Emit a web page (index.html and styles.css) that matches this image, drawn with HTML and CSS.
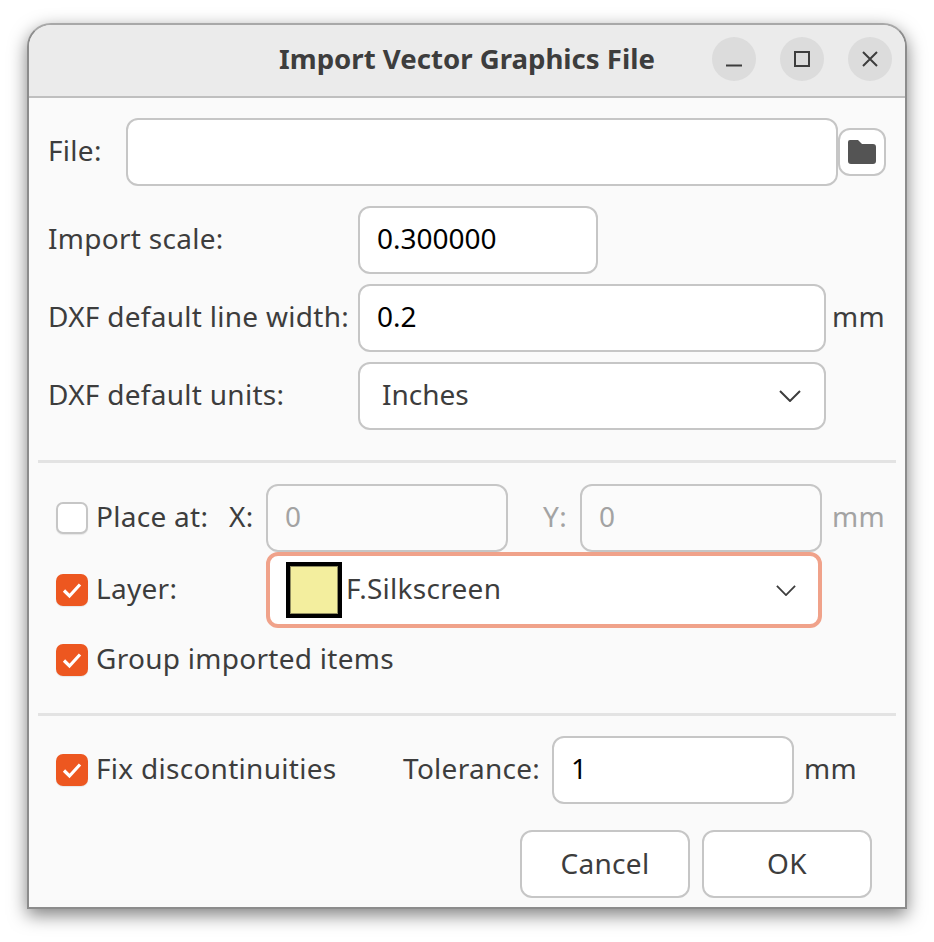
FILE: index.html
```html
<!DOCTYPE html>
<html lang="en">
<head>
    <meta charset="UTF-8">
    <meta name="viewport" content="width=device-width, initial-scale=1.0">
    <title>Import Vector Graphics File</title>
    <link rel="stylesheet" href="styles.css">
</head>
<body>
    <div class="window">
        <div class="titlebar">
            <h1 class="title">Import Vector Graphics File</h1>
            <div class="win-buttons">
                <button class="win-btn" aria-label="Minimize">
                    <svg width="18" height="18" viewBox="0 0 18 18"><path d="M1 15.5h16" stroke="#3d3d3d" stroke-width="2" fill="none"/></svg>
                </button>
                <button class="win-btn" aria-label="Maximize">
                    <svg width="18" height="18" viewBox="0 0 18 18"><rect x="2" y="2" width="14" height="14" stroke="#3d3d3d" stroke-width="2" fill="none"/></svg>
                </button>
                <button class="win-btn" aria-label="Close">
                    <svg width="18" height="18" viewBox="0 0 18 18"><path d="M2 2l14 14M16 2L2 16" stroke="#3d3d3d" stroke-width="2" fill="none"/></svg>
                </button>
            </div>
        </div>

        <div class="content">
            <div class="file-row">
                <label class="text file-label">File:</label>
                <div class="field file-field"></div>
                <button class="folder-btn" aria-label="Browse">
                    <svg width="28" height="24" viewBox="0 0 28 24"><path d="M2 0h8l4 4h11a3 3 0 0 1 3 3v14a3 3 0 0 1-3 3H3a3 3 0 0 1-3-3V2a2 2 0 0 1 2-2z" fill="#545454"/></svg>
                </button>
            </div>

            <div class="form-grid">
                <label class="text">Import scale:</label>
                <div class="field field-scale">0.300000</div>
                <span></span>

                <label class="text">DXF default line width:</label>
                <div class="field">0.2</div>
                <span class="text unit">mm</span>

                <label class="text">DXF default units:</label>
                <div class="field select">
                    <span class="select-value">Inches</span>
                    <svg class="chevron" width="22" height="12" viewBox="0 0 22 12"><path d="M1 1l10 10L21 1" stroke="#3d3d3d" stroke-width="2" fill="none"/></svg>
                </div>
                <span></span>
            </div>

            <hr class="sep sep-top">

            <div class="place-row">
                <span class="check"></span>
                <label class="text check-label label-place">Place at:</label>
                <label class="text label-x">X:</label>
                <div class="field disabled coord">0</div>
                <label class="text muted label-y">Y:</label>
                <div class="field disabled coord">0</div>
                <span class="text muted unit">mm</span>
            </div>

            <div class="layer-row">
                <span class="check checked">
                    <svg width="22" height="18" viewBox="0 0 22 18"><path d="M3 9.5l5.5 5.5L19 3.5" stroke="#fff" stroke-width="3.2" fill="none"/></svg>
                </span>
                <label class="text check-label label-layer">Layer:</label>
                <div class="layer-select">
                    <span class="swatch"></span>
                    <span class="text layer-name">F.Silkscreen</span>
                    <svg class="chevron" width="20" height="11" viewBox="0 0 22 12"><path d="M1 1l10 10L21 1" stroke="#3d3d3d" stroke-width="2" fill="none"/></svg>
                </div>
            </div>

            <div class="group-row">
                <span class="check checked">
                    <svg width="22" height="18" viewBox="0 0 22 18"><path d="M3 9.5l5.5 5.5L19 3.5" stroke="#fff" stroke-width="3.2" fill="none"/></svg>
                </span>
                <label class="text check-label">Group imported items</label>
            </div>

            <hr class="sep sep-bottom">

            <div class="fix-row">
                <span class="check checked">
                    <svg width="22" height="18" viewBox="0 0 22 18"><path d="M3 9.5l5.5 5.5L19 3.5" stroke="#fff" stroke-width="3.2" fill="none"/></svg>
                </span>
                <label class="text check-label label-fix">Fix discontinuities</label>
                <label class="text label-tol">Tolerance:</label>
                <div class="field tol">1</div>
                <span class="text unit">mm</span>
            </div>

            <div class="actions">
                <button class="btn">Cancel</button>
                <button class="btn">OK</button>
            </div>
        </div>
    </div>
</body>
</html>
```

FILE: styles.css
```css
* {
    box-sizing: border-box;
}

html {
    height: 100%;
    background: #fff;
}

body {
    margin: 0;
    padding: 23px 0 0 27px;
    height: 942px;
    font-family: "Noto Sans", "Open Sans", sans-serif;
}

.window {
    width: 880px;
    height: 886px;
    background: #fafafa;
    border: 2px solid #8c8c8c;
    border-top-color: #a8a8a8;
    border-radius: 24px 24px 0 0;
    box-shadow: 0 6px 18px rgba(0, 0, 0, 0.5);
}

/* titlebar */
.titlebar {
    height: 73px;
    display: flex;
    align-items: center;
    justify-content: flex-end;
    position: relative;
    background: #ebebeb;
    border-bottom: 2px solid #bfbfbf;
    border-radius: 22px 22px 0 0;
    padding-right: 13px;
    padding-bottom: 3px;
}

.title {
    position: absolute;
    left: 0;
    right: 0;
    margin: 0;
    padding-bottom: 2px;
    text-align: center;
    font-size: 27.6px;
    font-weight: 700;
    color: #3d3d3d;
}

.win-buttons {
    display: flex;
    gap: 24px;
    position: relative;
}

.win-btn {
    width: 44px;
    height: 44px;
    padding: 0;
    border: 0;
    border-radius: 50%;
    background: #dcdcdc;
    display: flex;
    align-items: center;
    justify-content: center;
}

/* form */
.content {
    padding: 20px 9px 0;
}

.text {
    font-size: 28px;
    letter-spacing: 0.28px;
    padding-bottom: 4px;
    color: #3d3d3d;
    white-space: nowrap;
}

.muted {
    color: #a3a3a3;
}

.field {
    height: 68px;
    background: #fff;
    border: 2px solid #c6c6c6;
    border-radius: 12px;
    display: flex;
    align-items: center;
    padding: 0 17px 4px;
    font-size: 28px;
    color: #000;
}

.file-row {
    display: flex;
    align-items: center;
    padding-left: 10px;
}

.file-label {
    width: 78px;
}

.file-field {
    width: 712px;
}

.folder-btn {
    width: 48px;
    height: 48px;
    padding: 0;
    background: #fff;
    border: 2px solid #c6c6c6;
    border-radius: 12px;
    display: flex;
    align-items: center;
    justify-content: center;
}

.form-grid {
    display: grid;
    grid-template-columns: 310px 468px 1fr;
    row-gap: 10px;
    align-items: center;
    margin-top: 20px;
    padding-left: 10px;
}

.field-scale {
    width: 240px;
}

.unit {
    flex: none;
    margin-left: 10px;
}

.form-grid .unit {
    margin-left: 6px;
}

.select {
    justify-content: space-between;
    padding: 0 23px 4px 22px;
    color: #3d3d3d;
}

.select .chevron {
    margin-top: 4px;
}

.sep {
    margin: 0;
    height: 3px;
    border: 0;
    background: #e3e3e3;
}

.sep-top {
    margin-top: 30px;
}

.sep-bottom {
    margin-top: 32px;
}

.check {
    width: 32px;
    height: 32px;
    flex: none;
    background: #fff;
    border: 2px solid #c6c6c6;
    border-radius: 7px;
    box-shadow: 0 1px 1px rgba(0, 0, 0, 0.08);
    display: flex;
    align-items: center;
    justify-content: center;
}

.check.checked {
    background: #ed5720;
    border: 0;
}

.check-label {
    margin-left: 8px;
}

.place-row,
.layer-row,
.group-row,
.fix-row {
    display: flex;
    align-items: center;
    padding-left: 18px;
}

.place-row {
    margin-top: 21px;
}

.label-place {
    width: 133px;
}

.label-x {
    width: 37px;
}

.coord {
    width: 242px;
    background: #fbfbfb;
    color: #a3a3a3;
}

.label-y {
    width: 72px;
    text-align: right;
    padding-right: 13px;
}

.label-layer {
    width: 170px;
}

.layer-select {
    width: 556px;
    height: 76px;
    background: #fff;
    border: 4px solid #f0a28a;
    border-radius: 12px;
    display: flex;
    align-items: center;
    padding: 0 22px 0 16px;
}

.swatch {
    width: 56px;
    height: 56px;
    background: #f3ee9e;
    border: 4px solid #000;
    box-shadow: inset 0 0 0 1px #8f8c60;
}

.layer-name {
    margin-left: 4px;
    flex: 1;
}

.group-row {
    margin-top: 11px;
}

.fix-row {
    margin-top: 20px;
}

.label-fix {
    width: 307px;
}

.label-tol {
    width: 149px;
}

.tol {
    width: 242px;
}

.actions {
    display: flex;
    justify-content: flex-end;
    gap: 12px;
    margin-top: 26px;
    padding-right: 24px;
}

.btn {
    width: 170px;
    height: 68px;
    padding: 0 0 3px;
    background: #fff;
    border: 2px solid #c6c6c6;
    border-radius: 12px;
    font-family: inherit;
    font-size: 28px;
    letter-spacing: 0.28px;
    color: #3d3d3d;
}
```
